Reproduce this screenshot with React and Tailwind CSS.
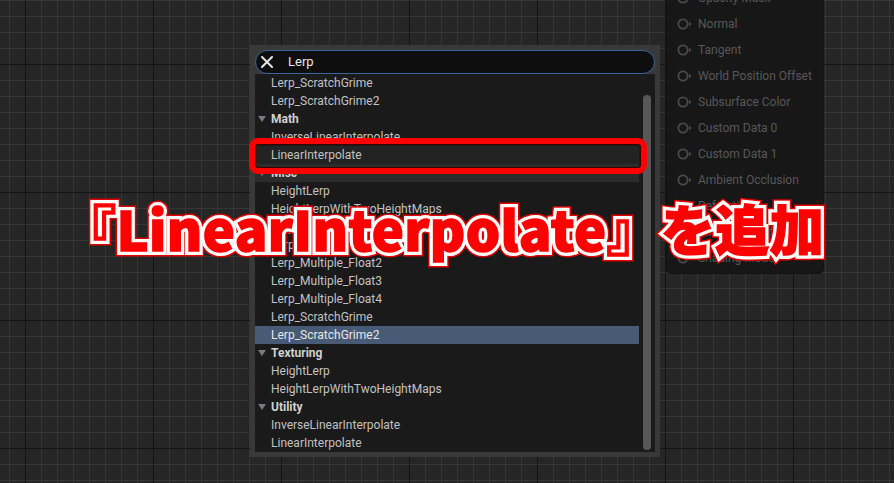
import React from "react";

const rows = [
  { t: "Lerp_ScratchGrime" },
  { t: "Lerp_ScratchGrime2" },
  { t: "Math", cat: true },
  { t: "InverseLinearInterpolate" },
  { t: "LinearInterpolate", bg: "bg-[#232323]" },
  { t: "Misc", cat: true, bg: "bg-[#2c2c2c]" },
  { t: "HeightLerp" },
  { t: "HeightLerpWithTwoHeightMaps" },
  { t: "Lerp_3Color" },
  { t: "Lerp_Multiple_Float" },
  { t: "Lerp_Multiple_Float2" },
  { t: "Lerp_Multiple_Float3" },
  { t: "Lerp_Multiple_Float4" },
  { t: "Lerp_ScratchGrime" },
  { t: "Lerp_ScratchGrime2", bg: "bg-[#475b76]", sel: true },
  { t: "Texturing", cat: true },
  { t: "HeightLerp" },
  { t: "HeightLerpWithTwoHeightMaps" },
  { t: "Utility", cat: true },
  { t: "InverseLinearInterpolate" },
  { t: "LinearInterpolate" },
];

const pins = [
  "Opacity Mask",
  "Normal",
  "Tangent",
  "World Position Offset",
  "Subsurface Color",
  "Custom Data 0",
  "Custom Data 1",
  "Ambient Occlusion",
  "Refraction",
  "Pixel Depth Offset",
  "Shading Model",
];

function Row({ r }) {
  if (r.cat) {
    return (
      <div className={`h-[18px] flex items-center pl-[3px] ${r.bg || ""}`}>
        <svg width="8" height="6" viewBox="0 0 8 6" className="mr-[5px]">
          <polygon points="0,0 8,0 4,6" fill="#7a7a7a" />
        </svg>
        <span className="font-bold text-[12px] text-[#d0d0d0]">{r.t}</span>
      </div>
    );
  }
  return (
    <div className={`h-[18px] flex items-center pl-4 text-[12px] ${r.sel ? "text-[#e6e6e6]" : "text-[#c2c2c2]"} ${r.bg || ""}`}>
      {r.t}
    </div>
  );
}

function Pin({ label }) {
  return (
    <div className="h-[26px] flex items-center pl-[10px]">
      <svg width="17" height="12" viewBox="0 0 17 12" className="mr-[4px]">
        <circle cx="6" cy="6" r="4.6" fill="none" stroke="#4b4b4b" strokeWidth="1.8" />
        <polygon points="12,3.8 14.6,6 12,8.2" fill="#4b4b4b" />
      </svg>
      <span className="text-[12px] text-[#585858]">{label}</span>
    </div>
  );
}

const titleCls =
  "col-start-1 row-start-1 whitespace-nowrap text-[54px] leading-none font-black tracking-[0.4px]";

export default function App() {
  const title = "『LinearInterpolate』を追加";
  return (
    <div
      className="relative w-[894px] h-[483px] overflow-hidden bg-[#262626] bg-[linear-gradient(to_right,#131313_1px,transparent_1px),linear-gradient(to_bottom,#131313_1px,transparent_1px),linear-gradient(to_right,#363636_1px,transparent_1px),linear-gradient(to_bottom,#363636_1px,transparent_1px)] bg-[size:128px_128px,128px_128px,16px_16px,16px_16px] bg-[position:25px_0,0_64px,9px_0,0_0]"
      style={{ fontFamily: "Roboto, 'Liberation Sans', sans-serif" }}
    >
      {/* material node */}
      <div className="absolute left-[667px] top-[-20px] w-[156px] h-[293px] bg-[#171717] rounded-b-[5px] shadow-[0_0_0_1px_#121212] pt-[5px] flex flex-col">
        {pins.map((p) => (
          <Pin key={p} label={p} />
        ))}
      </div>

      {/* search dialog */}
      <div className="absolute left-[250px] top-[45px] w-[410px] h-[412px] bg-[#393939] pt-[5px] px-[5px] pb-[5px] flex flex-col">
        <div className="h-[24px] rounded-full bg-[#0e0e0e] border-[1.5px] border-[#3466a0] flex items-center pl-[5px]">
          <svg width="12" height="12" viewBox="0 0 12 12" className="mr-[15px]">
            <path d="M1 1 L11 11 M11 1 L1 11" stroke="#e4e4e4" strokeWidth="2" strokeLinecap="round" />
          </svg>
          <span className="text-[13px] text-[#e6e6e6]">Lerp</span>
        </div>
        <div className="flex-1 flex bg-[#1a1a1a] min-h-0">
          <div className="w-[384px] flex flex-col overflow-hidden">
            {rows.map((r, i) => (
              <Row key={i} r={r} />
            ))}
          </div>
          <div className="flex-1 pt-[21px] pl-[4px]">
            <div className="w-[8px] h-[355px] rounded-full bg-[#575757]" />
          </div>
        </div>
      </div>

      {/* red highlight box */}
      <div className="absolute left-[249px] top-[138px] w-[398px] h-[36px] border-[6px] border-[#ff0000] rounded-[9px] shadow-[inset_0_0_0_1px_#3a0000]" />

      {/* caption */}
      <div
        className="absolute left-[62px] top-[201px] grid"
        style={{ fontFamily: "'Noto Sans CJK JP', sans-serif" }}
      >
        <span className={`${titleCls} text-[#ff0000] [-webkit-text-stroke:11px_#e00000]`}>{title}</span>
        <span className={`${titleCls} text-[#ff0000] [-webkit-text-stroke:8px_#ffffff]`}>{title}</span>
        <span className={`${titleCls} text-[#ff0000] [-webkit-text-stroke:1.5px_#ff0000]`}>{title}</span>
      </div>
    </div>
  );
}
